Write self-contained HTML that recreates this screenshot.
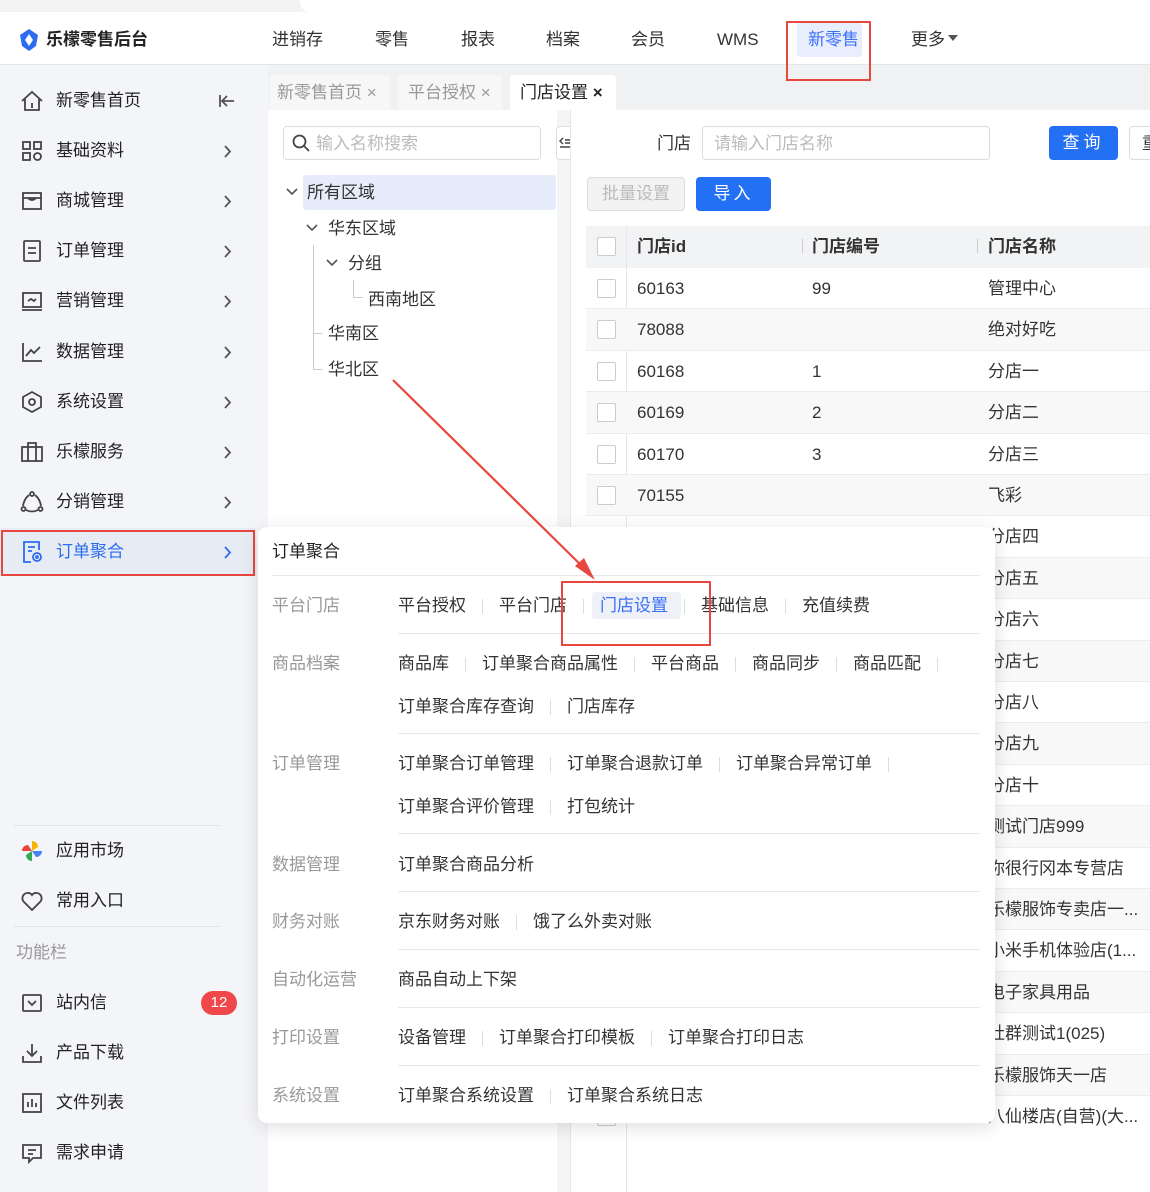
<!DOCTYPE html>
<html><head><meta charset="utf-8"><style>
*{margin:0;padding:0;box-sizing:border-box}
body{width:1150px;height:1192px;position:relative;overflow:hidden;background:#fff;font-family:"Liberation Sans","Noto Sans CJK SC",sans-serif;color:#333;font-size:17px;line-height:20px}
.a{position:absolute;white-space:nowrap}
.sb{position:absolute;left:0;top:65px;width:268px;height:1127px;background:#f4f5f8}
.si{position:absolute;left:0;width:254px;height:44px;display:flex;align-items:center}
.si svg{position:absolute;left:20px}
.si span{position:absolute;left:56px;top:12px;font-size:17px;color:#222}
.si svg.ch{left:223px}
.row{position:absolute;left:586px;width:564px;height:41.4px;border-bottom:1px solid #ececec}
.cb{position:absolute;left:11px;top:11px;width:19px;height:19px;border:1.5px solid #ccc;border-radius:2px;background:#fff}
.row b{font-weight:normal;position:absolute;top:11px}
.pl{position:absolute;left:272px;color:#999}
.lk{position:absolute;left:398px;display:flex;align-items:center}
.lk s{text-decoration:none;display:inline-block;width:1px;height:15px;background:#ddd;margin:0 16px}
</style></head><body>
<div class="a" style="left:0;top:0;width:1150px;height:12px;background:#f3f3f3"></div>
<div class="a" style="left:300px;top:0;width:850px;height:12px;background:#fff;border-radius:0 0 0 10px"></div>
<div class="a" style="left:0;top:12px;width:1150px;height:53px;background:#fff;border-bottom:1px solid #e4e4e4"></div>
<svg class="a" style="left:18px;top:28px" width="22" height="24" viewBox="0 0 22 24"><path d="M11 1 L20 7 L18 18 L11 23 L4 18 L2 7 Z" fill="#2b6cf0"/><path d="M11 6 L15 12 L11 18 L7 12Z" fill="#fff"/></svg>
<div class="a" style="left:46px;top:30px;font-weight:bold;font-size:17px;color:#222">乐檬零售后台</div>
<div class="a" style="left:272px;top:30px">进销存</div>
<div class="a" style="left:375px;top:30px">零售</div>
<div class="a" style="left:461px;top:30px">报表</div>
<div class="a" style="left:546px;top:30px">档案</div>
<div class="a" style="left:631px;top:30px">会员</div>
<div class="a" style="left:717px;top:30px">WMS</div>
<div class="a" style="left:797px;top:23px;width:65px;height:34px;background:#e8eefc;border-radius:3px"></div>
<div class="a" style="left:808px;top:30px;color:#3a6ff7">新零售</div>
<div class="a" style="left:911px;top:30px">更多<svg width="10" height="6" style="margin-left:3px;vertical-align:4px"><path d="M0 0 H10 L5 6Z" fill="#555"/></svg></div>

<div class="sb"></div>
<div class="si" style="top:79px"><svg width="24" height="24" viewBox="0 0 24 24" fill="none" stroke="#444" stroke-width="1.8"><path d="M2 12 L12 3 L22 12 M5 10 V21 H19 V10 M12 14 V19"/></svg><span>新零售首页</span><svg class="ch" style="left:218px" width="18" height="16" viewBox="0 0 18 16" fill="none" stroke="#555" stroke-width="1.8"><path d="M2 2 V14 M16 8 H4 M9 3 L4 8 L9 13"/></svg></div>
<div class="si" style="top:129px"><svg width="24" height="24" viewBox="0 0 24 24" fill="none" stroke="#444" stroke-width="1.8"><rect x="3" y="3" width="7" height="7"/><rect x="14" y="3" width="7" height="7"/><rect x="3" y="14" width="7" height="7"/><circle cx="17.5" cy="17.5" r="3.5"/></svg><span>基础资料</span><svg class="ch" width="9" height="15" viewBox="0 0 9 15" fill="none" stroke="#555" stroke-width="1.8"><path d="M2 2 L7 7.5 L2 13"/></svg></div>
<div class="si" style="top:179px"><svg width="24" height="24" viewBox="0 0 24 24" fill="none" stroke="#444" stroke-width="1.8"><rect x="3" y="4" width="18" height="16"/><path d="M3 9 H21 M8 9 Q12 13 16 9"/></svg><span>商城管理</span><svg class="ch" width="9" height="15" viewBox="0 0 9 15" fill="none" stroke="#555" stroke-width="1.8"><path d="M2 2 L7 7.5 L2 13"/></svg></div>
<div class="si" style="top:229px"><svg width="24" height="24" viewBox="0 0 24 24" fill="none" stroke="#444" stroke-width="1.8"><rect x="4" y="2" width="16" height="20" rx="1"/><path d="M8 9 H16 M8 14 H16"/></svg><span>订单管理</span><svg class="ch" width="9" height="15" viewBox="0 0 9 15" fill="none" stroke="#555" stroke-width="1.8"><path d="M2 2 L7 7.5 L2 13"/></svg></div>
<div class="si" style="top:279px"><svg width="24" height="24" viewBox="0 0 24 24" fill="none" stroke="#444" stroke-width="1.8"><rect x="3" y="4" width="18" height="14"/><path d="M2 21 H22 M8 12 L11 10 L14 12 L16 10"/></svg><span>营销管理</span><svg class="ch" width="9" height="15" viewBox="0 0 9 15" fill="none" stroke="#555" stroke-width="1.8"><path d="M2 2 L7 7.5 L2 13"/></svg></div>
<div class="si" style="top:330px"><svg width="24" height="24" viewBox="0 0 24 24" fill="none" stroke="#444" stroke-width="1.8"><path d="M3 3 V21 H22 M6 16 L11 10 L14 13 L20 7"/></svg><span>数据管理</span><svg class="ch" width="9" height="15" viewBox="0 0 9 15" fill="none" stroke="#555" stroke-width="1.8"><path d="M2 2 L7 7.5 L2 13"/></svg></div>
<div class="si" style="top:380px"><svg width="24" height="24" viewBox="0 0 24 24" fill="none" stroke="#444" stroke-width="1.8"><path d="M12 2 L21 7 V17 L12 22 L3 17 V7 Z"/><circle cx="12" cy="12" r="3"/></svg><span>系统设置</span><svg class="ch" width="9" height="15" viewBox="0 0 9 15" fill="none" stroke="#555" stroke-width="1.8"><path d="M2 2 L7 7.5 L2 13"/></svg></div>
<div class="si" style="top:430px"><svg width="24" height="24" viewBox="0 0 24 24" fill="none" stroke="#444" stroke-width="1.8"><rect x="2" y="7" width="20" height="14"/><path d="M8 7 V3 H16 V7 M8 7 V21 M16 7 V21"/></svg><span>乐檬服务</span><svg class="ch" width="9" height="15" viewBox="0 0 9 15" fill="none" stroke="#555" stroke-width="1.8"><path d="M2 2 L7 7.5 L2 13"/></svg></div>
<div class="si" style="top:480px"><svg width="24" height="24" viewBox="0 0 24 24" fill="none" stroke="#444" stroke-width="1.8"><circle cx="12" cy="4" r="2"/><circle cx="3.5" cy="19" r="2"/><circle cx="20.5" cy="19" r="2"/><path d="M9 5 Q4 9 3 16 M15 5 Q20 9 21 16 M6 20 Q12 23 18 20"/></svg><span>分销管理</span><svg class="ch" width="9" height="15" viewBox="0 0 9 15" fill="none" stroke="#555" stroke-width="1.8"><path d="M2 2 L7 7.5 L2 13"/></svg></div>
<div class="a" style="left:0;top:528px;width:256px;height:48px;background:#e7ebf4"></div>
<div class="si" style="top:530px"><svg width="24" height="24" viewBox="0 0 24 24" fill="none" stroke="#2b6cf0" stroke-width="1.8"><path d="M19 10 V2 H4 V22 H11"/><path d="M8 7 H15 M8 11 H12"/><circle cx="17" cy="17" r="4"/><circle cx="17" cy="17" r="1"/></svg><span style="color:#2b6cf0">订单聚合</span><svg class="ch" width="9" height="15" viewBox="0 0 9 15" fill="none" stroke="#2b6cf0" stroke-width="1.8"><path d="M2 2 L7 7.5 L2 13"/></svg></div>
<div class="a" style="left:1px;top:530px;width:254px;height:46px;border:2.5px solid #e8473d"></div>
<div class="a" style="left:14px;top:825px;width:206px;height:1px;background:#e2e3e6"></div>
<div class="si" style="top:829px"><svg width="24" height="24" viewBox="0 0 24 24"><path d="M12 12 L12 2 A6 6 0 0 1 18 8 Z" fill="#f4b400"/><path d="M12 12 L22 12 A6 6 0 0 1 16 18Z" fill="#4285f4"/><path d="M12 12 L12 22 A6 6 0 0 1 6 16Z" fill="#34a853"/><path d="M12 12 L2 12 A6 6 0 0 1 8 6Z" fill="#ea4335"/></svg><span>应用市场</span></div>
<div class="si" style="top:879px"><svg width="24" height="24" viewBox="0 0 24 24" fill="none" stroke="#444" stroke-width="1.8"><path d="M12 21 L3.5 12.5 A5 5 0 0 1 12 6 A5 5 0 0 1 20.5 12.5 Z"/></svg><span>常用入口</span></div>
<div class="a" style="left:14px;top:926px;width:206px;height:1px;background:#e2e3e6"></div>
<div class="a" style="left:16px;top:943px;color:#999">功能栏</div>
<div class="si" style="top:981px"><svg width="24" height="24" viewBox="0 0 24 24" fill="none" stroke="#444" stroke-width="1.8"><rect x="3" y="4" width="18" height="16" rx="1"/><path d="M8 10 L12 14 L16 10"/></svg><span>站内信</span></div>
<div class="a" style="left:201px;top:991px;width:36px;height:24px;border-radius:12px;background:#f0474a;color:#fff;font-size:15px;text-align:center;line-height:24px">12</div>
<div class="si" style="top:1031px"><svg width="24" height="24" viewBox="0 0 24 24" fill="none" stroke="#444" stroke-width="1.8"><path d="M12 3 V15 M7 10 L12 15 L17 10 M3 15 V21 H21 V15"/></svg><span>产品下载</span></div>
<div class="si" style="top:1081px"><svg width="24" height="24" viewBox="0 0 24 24" fill="none" stroke="#444" stroke-width="1.8"><rect x="3" y="3" width="18" height="18"/><path d="M8 16 V11 M12 16 V8 M16 16 V12"/></svg><span>文件列表</span></div>
<div class="si" style="top:1131px"><svg width="24" height="24" viewBox="0 0 24 24" fill="none" stroke="#444" stroke-width="1.8"><path d="M3 4 H21 V17 H13 L9 21 V17 H3 Z M8 9 H16 M8 13 H13"/></svg><span>需求申请</span></div>

<div class="a" style="left:268px;top:65px;width:882px;height:45px;background:#f0f1f3"></div>
<div class="a" style="left:270px;top:75px;width:120px;height:35px;background:#f7f7f8;border-radius:3px 3px 0 0;padding:8px 0 0 7px;color:#999">新零售首页 ×</div>
<div class="a" style="left:398px;top:75px;width:104px;height:35px;background:#f7f7f8;border-radius:3px 3px 0 0;padding:8px 0 0 10px;color:#999">平台授权 ×</div>
<div class="a" style="left:510px;top:75px;width:106px;height:35px;background:#fff;border-radius:3px 3px 0 0;padding:8px 0 0 10px;color:#222">门店设置 <b>×</b></div>
<div class="a" style="left:786px;top:21px;width:85px;height:60px;border:2px solid #e8473d"></div>

<div class="a" style="left:557px;top:110px;width:13px;height:1082px;background:#f4f5f7"></div>
<div class="a" style="left:556px;top:126px;width:14px;height:34px;background:#fff;border:1px solid #ddd;border-right:none;border-radius:4px 0 0 4px"></div>
<svg class="a" style="left:559px;top:137px" width="11" height="12" viewBox="0 0 11 12" fill="none" stroke="#444" stroke-width="1.5"><path d="M4 1 L1 4 L4 7 M6 3 H11 M6 6 H11 M1 10 H11"/></svg>
<div class="a" style="left:570px;top:110px;width:1px;height:1082px;background:#e6e6e6"></div>
<div class="a" style="left:283px;top:126px;width:258px;height:34px;border:1px solid #dcdcdc;border-radius:4px"></div>
<svg class="a" style="left:292px;top:134px" width="18" height="18" viewBox="0 0 18 18" fill="none" stroke="#444" stroke-width="1.8"><circle cx="7.5" cy="7.5" r="6"/><path d="M12 12 L17 17"/></svg>
<div class="a" style="left:316px;top:134px;color:#bbb">输入名称搜索</div>
<div class="a" style="left:303px;top:175px;width:253px;height:35px;background:#e6ecfa;border-radius:3px"></div>
<svg class="a" style="left:286px;top:188px" width="12" height="8" viewBox="0 0 12 8" fill="none" stroke="#555" stroke-width="1.6"><path d="M1 1 L6 6 L11 1"/></svg>
<div class="a" style="left:307px;top:183px">所有区域</div>
<svg class="a" style="left:306px;top:224px" width="12" height="8" viewBox="0 0 12 8" fill="none" stroke="#555" stroke-width="1.6"><path d="M1 1 L6 6 L11 1"/></svg>
<div class="a" style="left:328px;top:219px">华东区域</div>
<svg class="a" style="left:326px;top:259px" width="12" height="8" viewBox="0 0 12 8" fill="none" stroke="#555" stroke-width="1.6"><path d="M1 1 L6 6 L11 1"/></svg>
<div class="a" style="left:348px;top:254px">分组</div>
<div class="a" style="left:353px;top:280px;width:10px;height:18px;border-left:1px solid #ccc;border-bottom:1px solid #ccc"></div>
<div class="a" style="left:368px;top:290px">西南地区</div>
<div class="a" style="left:313px;top:245px;width:1px;height:125px;background:#ccc"></div>
<div class="a" style="left:313px;top:333px;width:9px;height:1px;background:#ccc"></div>
<div class="a" style="left:313px;top:369px;width:9px;height:1px;background:#ccc"></div>
<div class="a" style="left:328px;top:324px">华南区</div>
<div class="a" style="left:328px;top:360px">华北区</div>

<div class="a" style="left:657px;top:134px">门店</div>
<div class="a" style="left:702px;top:126px;width:288px;height:34px;border:1px solid #dcdcdc;border-radius:4px;padding:7px 0 0 11px;color:#bbb">请输入门店名称</div>
<div class="a" style="left:1049px;top:126px;width:69px;height:34px;background:#2370f4;border-radius:4px;color:#fff;text-align:center;line-height:34px;letter-spacing:4px">查询</div>
<div class="a" style="left:1129px;top:126px;width:30px;height:34px;border:1px solid #dcdcdc;border-radius:4px;padding:7px 0 0 12px">重</div>
<div class="a" style="left:587px;top:177px;width:98px;height:34px;background:#f2f2f2;border:1px solid #ddd;border-radius:4px;color:#bbb;text-align:center;line-height:32px">批量设置</div>
<div class="a" style="left:696px;top:177px;width:75px;height:34px;background:#2370f4;border-radius:4px;color:#fff;text-align:center;line-height:34px;letter-spacing:3px">导入</div>

<div class="a" style="left:586px;top:226px;width:564px;height:42px;background:#f2f3f5"></div>
<div class="a" style="left:597px;top:237px;width:19px;height:19px;border:1.5px solid #ccc;background:#fff;border-radius:2px"></div>
<div class="a" style="left:637px;top:237px;font-weight:bold">门店id</div>
<div class="a" style="left:802px;top:239px;width:1px;height:14px;background:#ccc"></div>
<div class="a" style="left:812px;top:237px;font-weight:bold">门店编号</div>
<div class="a" style="left:977px;top:239px;width:1px;height:14px;background:#ccc"></div>
<div class="a" style="left:988px;top:237px;font-weight:bold">门店名称</div>
<div class="a" style="left:626px;top:226px;width:1px;height:966px;background:#e6e6e6"></div>
<div class="row" style="top:268px"><div class="cb"></div><b style="left:51px">60163</b><b style="left:226px">99</b><b style="left:402px">管理中心</b></div>
<div class="row" style="top:309.4px;background:#f8f8f8"><div class="cb"></div><b style="left:51px">78088</b><b style="left:402px">绝对好吃</b></div>
<div class="row" style="top:350.8px"><div class="cb"></div><b style="left:51px">60168</b><b style="left:226px">1</b><b style="left:402px">分店一</b></div>
<div class="row" style="top:392.2px;background:#f8f8f8"><div class="cb"></div><b style="left:51px">60169</b><b style="left:226px">2</b><b style="left:402px">分店二</b></div>
<div class="row" style="top:433.6px"><div class="cb"></div><b style="left:51px">60170</b><b style="left:226px">3</b><b style="left:402px">分店三</b></div>
<div class="row" style="top:475px;background:#f8f8f8"><div class="cb"></div><b style="left:51px">70155</b><b style="left:402px">飞彩</b></div>
<div class="row" style="top:516.4px"><b style="left:402px">分店四</b></div>
<div class="row" style="top:557.8px;background:#f8f8f8"><b style="left:402px">分店五</b></div>
<div class="row" style="top:599.2px"><b style="left:402px">分店六</b></div>
<div class="row" style="top:640.6px;background:#f8f8f8"><b style="left:402px">分店七</b></div>
<div class="row" style="top:682px"><b style="left:402px">分店八</b></div>
<div class="row" style="top:723.4px;background:#f8f8f8"><b style="left:402px">分店九</b></div>
<div class="row" style="top:764.8px"><b style="left:402px">分店十</b></div>
<div class="row" style="top:806.2px;background:#f8f8f8"><b style="left:402px">测试门店999</b></div>
<div class="row" style="top:847.6px"><b style="left:402px">你很行冈本专营店</b></div>
<div class="row" style="top:889px;background:#f8f8f8"><b style="left:402px">乐檬服饰专卖店一...</b></div>
<div class="row" style="top:930.4px"><b style="left:402px">小米手机体验店(1...</b></div>
<div class="row" style="top:971.8px;background:#f8f8f8"><b style="left:402px">电子家具用品</b></div>
<div class="row" style="top:1013.2px"><b style="left:402px">社群测试1(025)</b></div>
<div class="row" style="top:1054.6px;background:#f8f8f8"><b style="left:402px">乐檬服饰天一店</b></div>
<div class="row" style="top:1096px;border-bottom:none"><div class="cb"></div><b style="left:402px">八仙楼店(自营)(大...</b></div>

<div class="a" style="left:258px;top:527px;width:737px;height:596px;background:#fff;border-radius:9px;box-shadow:0 4px 18px rgba(0,0,0,.13)"></div>
<div class="a" style="left:272px;top:542px;color:#222">订单聚合</div>
<div class="a" style="left:272px;top:575px;width:708px;height:1px;background:#e8e8e8"></div>
<div class="a" style="left:592px;top:592px;width:89px;height:27px;background:#eef1f8;border-radius:3px"></div>
<div class="pl a" style="top:596px">平台门店</div>
<div class="lk a" style="top:596px">平台授权<s></s>平台门店<s></s><span style="color:#3a6ff7">门店设置</span><s></s>基础信息<s></s>充值续费</div>
<div class="a" style="left:398px;top:633px;width:582px;height:1px;background:#e8e8e8"></div>
<div class="pl a" style="top:654px">商品档案</div>
<div class="lk a" style="top:654px">商品库<s></s>订单聚合商品属性<s></s>平台商品<s></s>商品同步<s></s>商品匹配<s></s></div>
<div class="lk a" style="top:697px">订单聚合库存查询<s></s>门店库存</div>
<div class="a" style="left:398px;top:733px;width:582px;height:1px;background:#e8e8e8"></div>
<div class="pl a" style="top:754px">订单管理</div>
<div class="lk a" style="top:754px">订单聚合订单管理<s></s>订单聚合退款订单<s></s>订单聚合异常订单<s></s></div>
<div class="lk a" style="top:797px">订单聚合评价管理<s></s>打包统计</div>
<div class="a" style="left:398px;top:833px;width:582px;height:1px;background:#e8e8e8"></div>
<div class="pl a" style="top:855px">数据管理</div>
<div class="lk a" style="top:855px">订单聚合商品分析</div>
<div class="a" style="left:398px;top:891px;width:582px;height:1px;background:#e8e8e8"></div>
<div class="pl a" style="top:912px">财务对账</div>
<div class="lk a" style="top:912px">京东财务对账<s></s>饿了么外卖对账</div>
<div class="a" style="left:398px;top:949px;width:582px;height:1px;background:#e8e8e8"></div>
<div class="pl a" style="top:970px">自动化运营</div>
<div class="lk a" style="top:970px">商品自动上下架</div>
<div class="a" style="left:398px;top:1007px;width:582px;height:1px;background:#e8e8e8"></div>
<div class="pl a" style="top:1028px">打印设置</div>
<div class="lk a" style="top:1028px">设备管理<s></s>订单聚合打印模板<s></s>订单聚合打印日志</div>
<div class="a" style="left:398px;top:1065px;width:582px;height:1px;background:#e8e8e8"></div>
<div class="pl a" style="top:1086px">系统设置</div>
<div class="lk a" style="top:1086px">订单聚合系统设置<s></s>订单聚合系统日志</div>

<div class="a" style="left:561px;top:581px;width:150px;height:65px;border:2.5px solid #e8473d"></div>
<svg class="a" style="left:0;top:0" width="1150" height="1192"><line x1="393" y1="380" x2="588" y2="572" stroke="#e8473d" stroke-width="2.2"/><path d="M595 580 L575 566 L584 558 Z" fill="#e8473d"/></svg>
</body></html>
